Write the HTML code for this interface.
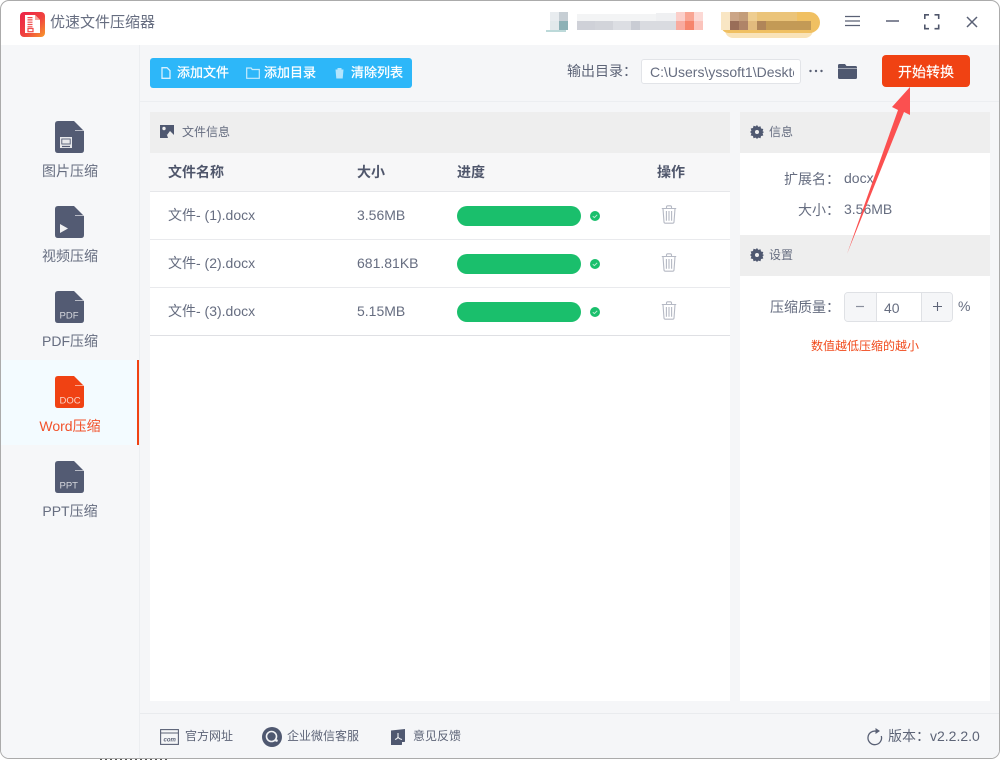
<!DOCTYPE html>
<html lang="zh">
<head>
<meta charset="utf-8">
<title>优速文件压缩器</title>
<style>
html,body{margin:0;padding:0;width:1000px;height:760px;overflow:hidden;background:#fff}
body{position:relative;font-family:"Liberation Sans","Noto Sans CJK SC",sans-serif;color:#5d6477;font-size:14px}
.a{position:absolute}
.t{position:absolute;white-space:nowrap;line-height:20px}
.b{font-weight:700;color:#4f566b}
svg{position:absolute;display:block}
.lbl{position:absolute;left:1px;width:138px;text-align:center;white-space:nowrap;font-size:14px;line-height:20px;color:#666d80}
.px{position:absolute}
</style>
</head>
<body>
<!-- outside-window fragments -->
<div class="a" style="left:100px;top:758px;width:70px;height:2px;background:repeating-linear-gradient(90deg,#555 0 2px,#fff 2px 5px)"></div>
<div class="a" style="left:1px;top:1px;width:998px;height:757px;border-radius:8px;background:#fff;overflow:hidden;box-shadow:0 0 0 1px #ababab">
  <div class="a" style="left:0;top:44px;width:138px;height:713px;background:#f6f7f9"></div>
  <div class="a" style="left:138px;top:44px;width:860px;height:713px;background:#f5f6f8"></div>
  <div class="a" style="left:138px;top:44px;width:1px;height:713px;background:#eceef1"></div>
  <div class="a" style="left:139px;top:100px;width:860px;height:1px;background:#eceef1"></div>
  <div class="a" style="left:139px;top:712px;width:860px;height:1px;background:#e9ebee"></div>
</div>

<!-- title bar -->
<svg style="left:20px;top:12px" width="25" height="25" viewBox="0 0 25 25">
  <defs><linearGradient id="g" x1="0" y1="0" x2="1" y2="1"><stop offset="0" stop-color="#ec2148"/><stop offset=".55" stop-color="#f0433f"/><stop offset="1" stop-color="#f89a2c"/></linearGradient></defs>
  <rect width="25" height="25" rx="4" fill="url(#g)"/>
  <path d="M5 3h10l5 5v13H5z" fill="#fff"/>
  <path d="M15 3v5h5z" fill="#f6a7a0"/>
  <path d="M7.500 5h5v1.200h-5zM7.500 7.300h5v1.200h-5zM7.500 9.600h5v1.200h-5zM7.500 11.900h5v1.200h-5zM7.500 14.200h5v1.200h-5z" fill="#ef4a4a"/>
  <rect x="8" y="16.500" width="5" height="3.200" fill="none" stroke="#ef4a4a" stroke-width="1.200"/>
</svg>
<div class="t" style="left:50px;top:13px;font-size:15px;color:#666d80">优速文件压缩器</div>

<!-- blurred account -->
<div class="px" style="left:550px;top:12px;width:9px;height:10px;background:#e8ecef"></div>
<div class="px" style="left:559px;top:12px;width:9px;height:10px;background:#c6ced4"></div>
<div class="px" style="left:550px;top:21px;width:9px;height:9px;background:#e2e9eb"></div>
<div class="px" style="left:559px;top:21px;width:9px;height:9px;background:#8db1b6"></div>
<div class="px" style="left:546px;top:30px;width:20px;height:2px;background:#bcd9d9"></div>
<div class="px" style="left:577px;top:14px;width:79px;height:7px;background:#f3f4f5"></div>
<div class="px" style="left:577px;top:21px;width:18px;height:9px;background:#cfd1d8"></div>
<div class="px" style="left:595px;top:21px;width:18px;height:9px;background:#d2d4da"></div>
<div class="px" style="left:613px;top:21px;width:18px;height:9px;background:#dcdee3"></div>
<div class="px" style="left:631px;top:21px;width:9px;height:9px;background:#c9ccd4"></div>
<div class="px" style="left:640px;top:21px;width:36px;height:9px;background:#d9dbe0"></div>
<div class="px" style="left:656px;top:13px;width:20px;height:8px;background:#eff0f2"></div>
<div class="px" style="left:676px;top:12px;width:9px;height:9px;background:#fbcfca"></div>
<div class="px" style="left:685px;top:12px;width:9px;height:9px;background:#f9a593"></div>
<div class="px" style="left:694px;top:12px;width:9px;height:9px;background:#fcd9d5"></div>
<div class="px" style="left:676px;top:21px;width:9px;height:9px;background:#f8ab9f"></div>
<div class="px" style="left:685px;top:21px;width:9px;height:9px;background:#f6856c"></div>
<div class="px" style="left:694px;top:21px;width:9px;height:9px;background:#fbc4bc"></div>
<div class="px" style="left:725px;top:30px;width:88px;height:8px;background:#f9e3b8;border-radius:0 0 14px 14px"></div>
<div class="px" style="left:721px;top:12px;width:99px;height:21px;background:#f0c062;border-radius:3px 14px 14px 10px"></div>
<div class="px" style="left:721px;top:12px;width:9px;height:18px;background:#f9e6c4"></div>
<div class="px" style="left:730px;top:12px;width:9px;height:9px;background:#cba587"></div>
<div class="px" style="left:739px;top:12px;width:9px;height:9px;background:#c39d7a"></div>
<div class="px" style="left:748px;top:12px;width:9px;height:9px;background:#eecd90"></div>
<div class="px" style="left:757px;top:12px;width:40px;height:9px;background:#ebc47a"></div>
<div class="px" style="left:730px;top:21px;width:9px;height:9px;background:#996d58"></div>
<div class="px" style="left:739px;top:21px;width:9px;height:9px;background:#af8468"></div>
<div class="px" style="left:748px;top:21px;width:9px;height:9px;background:#e2bb7e"></div>
<div class="px" style="left:757px;top:21px;width:9px;height:9px;background:#b08559"></div>
<div class="px" style="left:766px;top:21px;width:45px;height:9px;background:#c39a56"></div>

<!-- window controls -->
<svg style="left:844px;top:14px" width="18" height="14" viewBox="0 0 18 14"><path d="M1 2.500h15M1 7h15M1 11.500h15" stroke="#5a6175" stroke-width="1.300" fill="none"/></svg>
<svg style="left:885px;top:19px" width="16" height="4" viewBox="0 0 16 4"><path d="M1 2h13" stroke="#5a6175" stroke-width="1.500"/></svg>
<svg style="left:924px;top:14px" width="16" height="16" viewBox="0 0 16 16"><path d="M.8 5V.8H5M10.500.8h4.200V5M14.700 10.500v4.200h-4.200M5 14.700H.8v-4.200" stroke="#4f566b" stroke-width="1.600" fill="none"/></svg>
<svg style="left:966px;top:16px" width="12" height="12" viewBox="0 0 12 12"><path d="M1 1l10 10M11 1L1 11" stroke="#5a6175" stroke-width="1.500" fill="none"/></svg>

<!-- toolbar -->
<div class="a" style="left:150px;top:58px;width:262px;height:30px;background:#2db7f9;border-radius:3px"></div>
<svg style="left:161px;top:67px" width="10" height="12" viewBox="0 0 10 12"><path d="M1 .7h5l3 3v7.600H1z" fill="none" stroke="#d7f1fe" stroke-width="1.300"/></svg>
<div class="t" style="left:177px;top:63px;color:#fff;font-size:13px;-webkit-text-stroke:.3px #fff">添加文件</div>
<svg style="left:246px;top:67px" width="14" height="12" viewBox="0 0 14 12"><path d="M.7 1h4.500l1 1.500h7.100v8.800H.7z" fill="none" stroke="#c5ebfd" stroke-width="1.200"/></svg>
<div class="t" style="left:264px;top:63px;color:#fff;font-size:13px;-webkit-text-stroke:.3px #fff">添加目录</div>
<svg style="left:334px;top:67px" width="11" height="12" viewBox="0 0 11 12"><path d="M1.500 2.500h8L8.700 11.500H2.300zM3.500 1h4v1.500h-4z" fill="#b3e5fd"/></svg>
<div class="t" style="left:351px;top:63px;color:#fff;font-size:13px;-webkit-text-stroke:.3px #fff">清除列表</div>

<div class="t" style="left:567px;top:61px;font-size:14px;color:#5d6477">输出目录：</div>
<div class="a" style="left:641px;top:59px;width:158px;height:23px;border:1px solid #e2e4e8;border-radius:3px;background:#fff;overflow:hidden">
  <div class="t" style="left:8px;top:2px;font-size:14px;color:#666d80;width:144px;overflow:hidden">C:\Users\yssoft1\Desktop</div>
</div>
<svg style="left:808px;top:68px" width="16" height="6" viewBox="0 0 16 6"><circle cx="2.500" cy="3" r="1.200" fill="#5a6175"/><circle cx="8" cy="3" r="1.200" fill="#5a6175"/><circle cx="13.500" cy="3" r="1.200" fill="#5a6175"/></svg>
<svg style="left:837px;top:62px" width="21" height="18" viewBox="0 0 21 18"><path d="M1 3.500q0-1.500 1.500-1.500h5.500l1.500 2h9q1.500 0 1.500 1.500v.7H1z" fill="#4f5870"/><path d="M1 6.700h19v8.800q0 1.500-1.500 1.500h-16Q1 17 1 15.500z" fill="#4f5870"/></svg>
<div class="a" style="left:882px;top:55px;width:88px;height:32px;background:#f04213;border-radius:4px"></div>
<div class="t" style="left:882px;top:62px;width:88px;text-align:center;color:#fff;font-size:14px;-webkit-text-stroke:.2px #fff">开始转换</div>

<!-- sidebar -->
<svg style="left:55px;top:121px" width="29" height="32" viewBox="0 0 29 32"><path d="M3 0h16l10 10v19q0 3-3 3H3q-3 0-3-3V3q0-3 3-3z" fill="#535b73"/><path d="M20 9.500h9" stroke="#e4e6ea" stroke-width=".7"/><rect x="5" y="16" width="12" height="11" fill="#e8e9ec"/><rect x="6.800" y="18" width="8.400" height="5" fill="none" stroke="#535b73" stroke-width=".9"/><path d="M7 25.500h8" stroke="#535b73" stroke-width="1.200"/></svg>
<div class="lbl" style="top:161px">图片压缩</div>

<svg style="left:55px;top:206px" width="29" height="32" viewBox="0 0 29 32"><path d="M3 0h16l10 10v19q0 3-3 3H3q-3 0-3-3V3q0-3 3-3z" fill="#535b73"/><path d="M20 9.500h9" stroke="#e4e6ea" stroke-width=".7"/><path d="M5 18l8 4.500-8 4.500z" fill="#f0f1f3"/></svg>
<div class="lbl" style="top:246px">视频压缩</div>

<svg style="left:55px;top:291px" width="29" height="32" viewBox="0 0 29 32"><path d="M3 0h16l10 10v19q0 3-3 3H3q-3 0-3-3V3q0-3 3-3z" fill="#535b73"/><path d="M20 9.500h9" stroke="#e4e6ea" stroke-width=".7"/><text x="4.500" y="27.500" font-size="9.500" font-family="Liberation Sans" fill="#d5d7dd">PDF</text></svg>
<div class="lbl" style="top:331px">PDF压缩</div>

<div class="a" style="left:1px;top:360px;width:136px;height:85px;background:#f3fbff"></div>
<div class="a" style="left:137px;top:360px;width:2px;height:85px;background:#f04213"></div>
<svg style="left:55px;top:376px" width="29" height="32" viewBox="0 0 29 32"><path d="M3 0h16l10 10v19q0 3-3 3H3q-3 0-3-3V3q0-3 3-3z" fill="#f04213"/><path d="M20 9.500h9" stroke="#fbd5c8" stroke-width=".7"/><text x="4.500" y="27.500" font-size="9.500" font-family="Liberation Sans" fill="#fbd5c8">DOC</text></svg>
<div class="lbl" style="top:416px;color:#f2522b">Word压缩</div>

<svg style="left:55px;top:461px" width="29" height="32" viewBox="0 0 29 32"><path d="M3 0h16l10 10v19q0 3-3 3H3q-3 0-3-3V3q0-3 3-3z" fill="#535b73"/><path d="M20 9.500h9" stroke="#e4e6ea" stroke-width=".7"/><text x="4.500" y="27.500" font-size="9.500" font-family="Liberation Sans" fill="#d5d7dd">PPT</text></svg>
<div class="lbl" style="top:501px">PPT压缩</div>

<!-- main panel -->
<div class="a" style="left:150px;top:112px;width:580px;height:589px;background:#fff"></div>
<div class="a" style="left:150px;top:112px;width:580px;height:41px;background:#eeeeee"></div>
<svg style="left:160px;top:125px" width="14" height="13" viewBox="0 0 14 13"><path d="M0 0h14v13H0z" fill="#4f5870"/><circle cx="4" cy="3.500" r="1.700" fill="#eee"/><path d="M0 12l4-4 3 2 3-4 4 4v3H0z" fill="#eee"/><path d="M0 13V10.500l4-3 3 2.500 1 3z" fill="#4f5870"/></svg>
<div class="t" style="left:182px;top:122px;font-size:12px;color:#666d80">文件信息</div>
<div class="a" style="left:150px;top:153px;width:580px;height:38px;background:#f7f7f8;border-bottom:1px solid #e6e7ea"></div>
<div class="t b" style="left:168px;top:162px;font-size:14px">文件名称</div>
<div class="t b" style="left:357px;top:162px;font-size:14px">大小</div>
<div class="t b" style="left:457px;top:162px;font-size:14px">进度</div>
<div class="t b" style="left:657px;top:162px;font-size:14px">操作</div>

<div class="a" style="left:150px;top:239px;width:580px;height:1px;background:#e9eaed"></div>
<div class="a" style="left:150px;top:287px;width:580px;height:1px;background:#e9eaed"></div>
<div class="a" style="left:150px;top:335px;width:580px;height:1px;background:#dfe0e4"></div>

<div class="t" style="left:168px;top:205px;font-size:14px;color:#666d80">文件- (1).docx</div>
<div class="t" style="left:357px;top:205px;font-size:14px;color:#666d80">3.56MB</div>
<div class="a" style="left:457px;top:206px;width:124px;height:20px;border-radius:10px;background:#1abf6c"></div>
<svg style="left:590px;top:211px" width="10" height="10" viewBox="0 0 10 10"><circle cx="5" cy="5" r="5" fill="#1abf6c"/><path d="M2.800 5.200l1.600 1.400 2.800-2.800" stroke="#b8ecd0" stroke-width="1" fill="none"/></svg>
<svg style="left:661px;top:205px" width="16" height="19" viewBox="0 0 16 19"><path d="M.8 3.500h14.400M5.500 3.200V2q0-1.200 1.200-1.200h2.600q1.200 0 1.200 1.200v1.200M2 3.700l1 13.300q.1 1.200 1.300 1.200h7.400q1.200 0 1.300-1.200l1-13.300M5.400 6v9.800M8 6v9.800M10.600 6v9.800" fill="none" stroke="#b5b9c4" stroke-width="1.100"/></svg>

<div class="t" style="left:168px;top:253px;font-size:14px;color:#666d80">文件- (2).docx</div>
<div class="t" style="left:357px;top:253px;font-size:14px;color:#666d80">681.81KB</div>
<div class="a" style="left:457px;top:254px;width:124px;height:20px;border-radius:10px;background:#1abf6c"></div>
<svg style="left:590px;top:259px" width="10" height="10" viewBox="0 0 10 10"><circle cx="5" cy="5" r="5" fill="#1abf6c"/><path d="M2.800 5.200l1.600 1.400 2.800-2.800" stroke="#b8ecd0" stroke-width="1" fill="none"/></svg>
<svg style="left:661px;top:253px" width="16" height="19" viewBox="0 0 16 19"><path d="M.8 3.500h14.400M5.500 3.200V2q0-1.200 1.200-1.200h2.600q1.200 0 1.200 1.200v1.200M2 3.700l1 13.300q.1 1.200 1.300 1.200h7.400q1.200 0 1.300-1.200l1-13.300M5.400 6v9.800M8 6v9.800M10.600 6v9.800" fill="none" stroke="#b5b9c4" stroke-width="1.100"/></svg>

<div class="t" style="left:168px;top:301px;font-size:14px;color:#666d80">文件- (3).docx</div>
<div class="t" style="left:357px;top:301px;font-size:14px;color:#666d80">5.15MB</div>
<div class="a" style="left:457px;top:302px;width:124px;height:20px;border-radius:10px;background:#1abf6c"></div>
<svg style="left:590px;top:307px" width="10" height="10" viewBox="0 0 10 10"><circle cx="5" cy="5" r="5" fill="#1abf6c"/><path d="M2.800 5.200l1.600 1.400 2.800-2.800" stroke="#b8ecd0" stroke-width="1" fill="none"/></svg>
<svg style="left:661px;top:301px" width="16" height="19" viewBox="0 0 16 19"><path d="M.8 3.500h14.400M5.500 3.200V2q0-1.200 1.200-1.200h2.600q1.200 0 1.200 1.200v1.200M2 3.700l1 13.300q.1 1.200 1.300 1.200h7.400q1.200 0 1.300-1.200l1-13.300M5.400 6v9.800M8 6v9.800M10.600 6v9.800" fill="none" stroke="#b5b9c4" stroke-width="1.100"/></svg>

<!-- right panel -->
<div class="a" style="left:740px;top:112px;width:250px;height:589px;background:#fff"></div>
<div class="a" style="left:740px;top:112px;width:250px;height:41px;background:#eeeeee"></div>
<svg style="left:750px;top:125px" width="14" height="14" viewBox="0 0 14 14"><path d="M7 0l1.300 1.900 2.200-.7.500 2.300 2.300.5-.7 2.200L14 7l-1.400 1.300.7 2.200-2.300.5-.5 2.300-2.200-.7L7 14l-1.300-1.400-2.200.7-.5-2.300-2.300-.5.700-2.200L0 7l1.400-1.300-.7-2.200 2.300-.5.500-2.300 2.200.7z" fill="#4f5870"/><circle cx="7" cy="7" r="2" fill="#eee"/></svg>
<div class="t" style="left:769px;top:122px;font-size:12px;color:#666d80">信息</div>
<div class="t" style="left:784px;top:169px;font-size:14px;color:#666d80">扩展名：</div>
<div class="t" style="left:844px;top:168px;font-size:14px;color:#666d80">docx</div>
<div class="t" style="left:798px;top:200px;font-size:14px;color:#666d80">大小：</div>
<div class="t" style="left:844px;top:199px;font-size:14px;color:#666d80">3.56MB</div>

<div class="a" style="left:740px;top:235px;width:250px;height:41px;background:#eeeeee"></div>
<svg style="left:750px;top:248px" width="14" height="14" viewBox="0 0 14 14"><path d="M7 0l1.300 1.900 2.200-.7.500 2.300 2.300.5-.7 2.200L14 7l-1.400 1.300.7 2.200-2.300.5-.5 2.300-2.200-.7L7 14l-1.300-1.400-2.200.7-.5-2.300-2.300-.5.700-2.200L0 7l1.400-1.300-.7-2.200 2.300-.5.500-2.300 2.200.7z" fill="#4f5870"/><circle cx="7" cy="7" r="2" fill="#eee"/></svg>
<div class="t" style="left:769px;top:245px;font-size:12px;color:#666d80">设置</div>
<div class="t" style="left:770px;top:297px;font-size:14px;color:#666d80">压缩质量：</div>
<div class="a" style="left:844px;top:292px;width:107px;height:28px;border:1px solid #dfe1e5;border-radius:4px;background:#fff;overflow:hidden">
  <div class="a" style="left:0;top:0;width:31px;height:28px;background:#f5f6f8;border-right:1px solid #dfe1e5"></div>
  <div class="a" style="right:0;top:0;width:30px;height:28px;background:#f5f6f8;border-left:1px solid #dfe1e5"></div>
</div>
<svg style="left:855px;top:305px" width="10" height="3" viewBox="0 0 10 3"><path d="M1 1.500h8" stroke="#8a8f9d" stroke-width="1.200"/></svg>
<svg style="left:932px;top:301px" width="11" height="11" viewBox="0 0 11 11"><path d="M1 5.500h9M5.500 1v9" stroke="#5d6477" stroke-width="1.100"/></svg>
<div class="t" style="left:884px;top:298px;font-size:14px;color:#666d80">40</div>
<div class="t" style="left:958px;top:296px;font-size:14px;color:#666d80">%</div>
<div class="t" style="left:811px;top:336px;font-size:12px;color:#f04a1c">数值越低压缩的越小</div>

<!-- footer -->
<svg style="left:160px;top:729px" width="19" height="16" viewBox="0 0 19 16"><rect x=".6" y=".6" width="17.800" height="14.800" fill="none" stroke="#5a6175" stroke-width="1.100"/><path d="M.6 4h17.800" stroke="#5a6175" stroke-width="1.100"/><text x="3.500" y="12.500" font-size="6" font-weight="700" font-style="italic" font-family="Liberation Sans" fill="#5a6175">com</text></svg>
<div class="t" style="left:185px;top:726px;font-size:12px;color:#5d6477">官方网址</div>
<svg style="left:262px;top:727px" width="20" height="20" viewBox="0 0 20 20"><circle cx="10" cy="10" r="10" fill="#4f5870"/><circle cx="9.500" cy="9.500" r="5" fill="none" stroke="#f2f3f5" stroke-width="1.600"/><circle cx="14.500" cy="13.500" r="1.300" fill="#f2f3f5"/></svg>
<div class="t" style="left:287px;top:726px;font-size:12px;color:#5d6477">企业微信客服</div>
<svg style="left:391px;top:729px" width="15" height="17" viewBox="0 0 15 17"><path d="M0 1.500L14 0v12.500L10.500 16H0z" fill="#4f5870"/><path d="M7 4v4M4 10.500q3-1 3-3 0 2 4 3" stroke="#eef0f3" stroke-width="1.100" fill="none"/><path d="M11 16v-3h3z" fill="#f5f6f8"/></svg>
<div class="t" style="left:413px;top:726px;font-size:12px;color:#5d6477">意见反馈</div>
<svg style="left:866px;top:728px" width="17" height="18" viewBox="0 0 17 18"><path d="M10.500 3.300A6.800 6.800 0 1 0 15.300 8" fill="none" stroke="#5a6175" stroke-width="1.300"/><path d="M9.500 0l4.500 3-4.500 3z" fill="#5a6175"/></svg>
<div class="t" style="left:888px;top:726px;font-size:14px;color:#5d6477">版本：v2.2.2.0</div>

<!-- annotation arrow -->
<svg style="left:0;top:0" width="1000" height="760" viewBox="0 0 1000 760"><polygon points="847,254 898,110 892,107 910,87 910,115 904,112" fill="#fb5050"/></svg>
</body>
</html>
